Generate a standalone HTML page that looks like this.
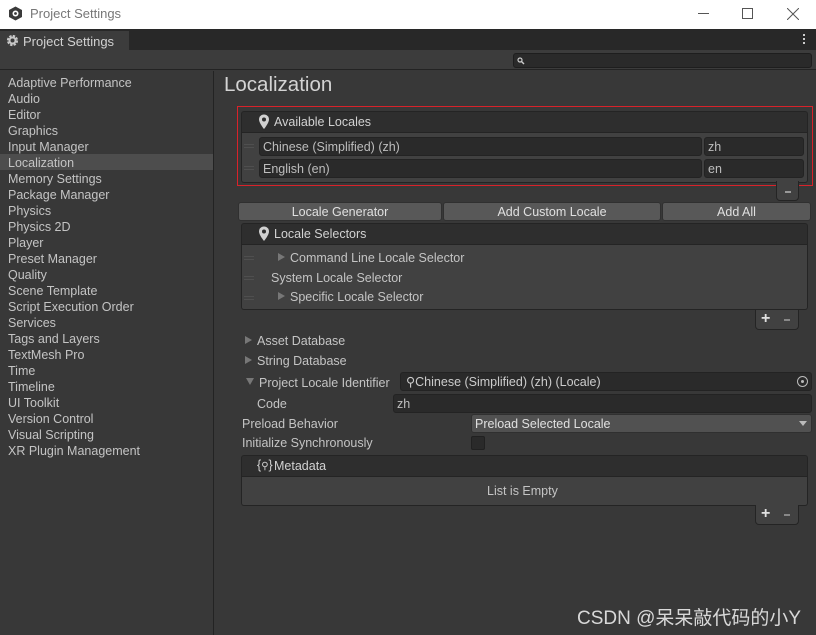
<!DOCTYPE html>
<html><head><meta charset="utf-8"><style>
*{box-sizing:border-box;margin:0;padding:0}
body{width:816px;height:635px;overflow:hidden;background:#383838;font-family:"Liberation Sans","Noto Sans CJK SC",sans-serif;font-size:12.5px;color:#c4c4c4;position:relative}
.a{position:absolute;white-space:nowrap}
.side div{height:16px;line-height:18px;padding-left:8px}
.fld{position:absolute;background:#2a2a2a;border:1px solid #232323;border-radius:3px;height:19px;line-height:19px;padding-left:3px;color:#bdbdbd}
.btn{position:absolute;background:#585858;border:1px solid #303030;border-radius:3px;height:19px;line-height:19px;text-align:center;color:#e0e0e0}
.hdr{position:absolute;background:#2e2e2e;border:1px solid #242424;border-radius:3px 3px 0 0}
.body{position:absolute;background:#414141;border:1px solid #242424;border-top:none;border-radius:0 0 3px 3px}
.grip{position:absolute;width:10px;height:4px;border-top:1px solid #4f4f4f;border-bottom:1px solid #4f4f4f}
.pm{position:absolute;background:#414141;border:1px solid #242424;border-top:none;border-radius:0 0 4px 4px;height:20px;color:#e0e0e0}
.tri{position:absolute;width:0;height:0;border-left:7px solid #8a8a8a;border-top:4.5px solid transparent;border-bottom:4.5px solid transparent}
.t{margin-top:1px}
</style></head><body>
<div class="a" style="left:0;top:0;width:816px;height:29px;background:#fff"></div>
<svg class="a" style="left:8px;top:6px" width="15" height="15" viewBox="0 0 15 15"><path d="M7.5 0.5 L14 4 L14 11 L7.5 14.5 L1 11 L1 4Z" fill="#3a3a3a"/><circle cx="7.5" cy="7.5" r="3" fill="#fff"/><circle cx="7.5" cy="7.5" r="1.4" fill="#3a3a3a"/></svg>
<div class="a" style="left:30px;top:6px;color:#777;font-size:13px">Project Settings</div>
<div class="a" style="left:698px;top:13px;width:11px;height:1px;background:#555"></div>
<div class="a" style="left:742px;top:8px;width:11px;height:11px;border:1px solid #555"></div>
<svg class="a" style="left:787px;top:8px" width="12" height="12"><path d="M0 0L12 12M12 0L0 12" stroke="#555" stroke-width="1"/></svg>
<div class="a" style="left:0;top:29px;width:816px;height:21px;background:#282828"></div>
<div class="a" style="left:0;top:31px;width:129px;height:19px;background:#3c3c3c"></div>
<svg class="a" style="left:6px;top:34px" width="13" height="13" viewBox="0 0 13 13"><circle cx="6.5" cy="6.5" r="4.3" fill="none" stroke="#c8c8c8" stroke-width="2.6" stroke-dasharray="2.2 1.2"/><circle cx="6.5" cy="6.5" r="3" fill="none" stroke="#c8c8c8" stroke-width="2"/></svg>
<div class="a" style="left:23px;top:34px;color:#d2d2d2;font-size:13px">Project Settings</div>
<div class="a" style="left:803px;top:34px;width:2px;height:2px;background:#ccc;box-shadow:0 4px #ccc,0 8px #ccc"></div>
<div class="a" style="left:0;top:50px;width:816px;height:20px;background:#3c3c3c;border-bottom:1px solid #232323"></div>
<div class="a" style="left:513px;top:53px;width:299px;height:15px;background:#2a2a2a;border:1px solid #1e1e1e;border-radius:3px"></div>
<svg class="a" style="left:517px;top:57px" width="8" height="8"><circle cx="3" cy="3" r="2" fill="none" stroke="#ccc" stroke-width="1.2"/><path d="M4.5 4.5L7 7" stroke="#ccc" stroke-width="1.4"/></svg>
<div class="a" style="left:213px;top:71px;width:1px;height:564px;background:#232323"></div>
<div class="a" style="left:0;top:154px;width:213px;height:16px;background:#4d4d4d"></div>
<div class="a side" style="left:0;top:74px;width:213px">
<div>Adaptive Performance</div><div>Audio</div><div>Editor</div><div>Graphics</div><div>Input Manager</div><div>Localization</div><div>Memory Settings</div><div>Package Manager</div><div>Physics</div><div>Physics 2D</div><div>Player</div><div>Preset Manager</div><div>Quality</div><div>Scene Template</div><div>Script Execution Order</div><div>Services</div><div>Tags and Layers</div><div>TextMesh Pro</div><div>Time</div><div>Timeline</div><div>UI Toolkit</div><div>Version Control</div><div>Visual Scripting</div><div>XR Plugin Management</div>
</div>
<div class="a" style="left:224px;top:73px;font-size:20.5px;color:#d4d4d4">Localization</div>

<div class="a" style="left:237px;top:106px;width:576px;height:80px;border:1px solid #d8222a"></div>
<div class="hdr" style="left:241px;top:111px;width:567px;height:22px"></div>
<svg class="a" style="left:258px;top:114px" width="12" height="16" viewBox="0 0 12 16"><path d="M6 0.5C3 0.5 1 2.7 1 5.5C1 9 6 15 6 15C6 15 11 9 11 5.5C11 2.7 9 0.5 6 0.5Z" fill="#d0d0d0"/><circle cx="6" cy="5.5" r="2" fill="#2e2e2e"/></svg>
<div class="a t" style="left:274px;top:114px;color:#d2d2d2">Available Locales</div>
<div class="body" style="left:241px;top:133px;width:567px;height:50px"></div>
<div class="grip" style="left:244px;top:144px"></div><div class="grip" style="left:244px;top:166px"></div>
<div class="fld" style="left:259px;top:137px;width:443px">Chinese (Simplified) (zh)</div>
<div class="fld" style="left:704px;top:137px;width:100px">zh</div>
<div class="fld" style="left:259px;top:159px;width:443px">English (en)</div>
<div class="fld" style="left:704px;top:159px;width:100px">en</div>
<div class="pm" style="left:776px;top:181px;width:23px"><div class="a" style="left:8px;top:10px;width:6px;height:2px;background:#999"></div></div>

<div class="btn" style="left:238px;top:202px;width:204px">Locale Generator</div>
<div class="btn" style="left:443px;top:202px;width:218px">Add Custom Locale</div>
<div class="btn" style="left:662px;top:202px;width:149px">Add All</div>

<div class="hdr" style="left:241px;top:223px;width:567px;height:22px"></div>
<svg class="a" style="left:258px;top:226px" width="12" height="16" viewBox="0 0 12 16"><path d="M6 0.5C3 0.5 1 2.7 1 5.5C1 9 6 15 6 15C6 15 11 9 11 5.5C11 2.7 9 0.5 6 0.5Z" fill="#d0d0d0"/><circle cx="6" cy="5.5" r="2" fill="#2e2e2e"/></svg>
<div class="a t" style="left:274px;top:226px;color:#d2d2d2">Locale Selectors</div>
<div class="body" style="left:241px;top:245px;width:567px;height:65px"></div>
<div class="grip" style="left:244px;top:256px"></div><div class="grip" style="left:244px;top:276px"></div><div class="grip" style="left:244px;top:296px"></div>
<div class="tri" style="left:278px;top:253px;border-left-color:#777"></div>
<div class="a t" style="left:290px;top:250px">Command Line Locale Selector</div>
<div class="a t" style="left:271px;top:270px">System Locale Selector</div>
<div class="tri" style="left:278px;top:292px;border-left-color:#777"></div>
<div class="a t" style="left:290px;top:289px">Specific Locale Selector</div>
<div class="pm" style="left:755px;top:310px;width:44px"><span class="a" style="left:5px;top:0;font-size:16px;font-weight:bold">+</span><div class="a" style="left:28px;top:9px;width:6px;height:2px;background:#888"></div></div>

<div class="tri" style="left:245px;top:336px;border-left-color:#777"></div>
<div class="a t" style="left:257px;top:333px">Asset Database</div>
<div class="tri" style="left:245px;top:356px;border-left-color:#777"></div>
<div class="a t" style="left:257px;top:353px">String Database</div>
<div class="a" style="left:246px;top:378px;width:0;height:0;border-top:7px solid #777;border-left:4.5px solid transparent;border-right:4.5px solid transparent"></div>
<div class="a t" style="left:259px;top:375px">Project Locale Identifier</div>
<div class="fld" style="left:400px;top:372px;width:412px;padding-left:5px;color:#ccc">⚲Chinese (Simplified) (zh) (Locale)</div>
<div class="a" style="left:797px;top:376px;width:11px;height:11px;border:1px solid #bbb;border-radius:50%"><div class="a" style="left:3px;top:3px;width:3px;height:3px;background:#bbb;border-radius:50%"></div></div>
<div class="a t" style="left:257px;top:396px">Code</div>
<div class="fld" style="left:393px;top:394px;width:419px">zh</div>
<div class="a t" style="left:242px;top:416px">Preload Behavior</div>
<div class="btn" style="left:471px;top:414px;width:341px;background:#515151;text-align:left;padding-left:3px">Preload Selected Locale</div>
<div class="a" style="left:799px;top:421px;width:0;height:0;border-top:5px solid #bbb;border-left:4px solid transparent;border-right:4px solid transparent"></div>
<div class="a t" style="left:242px;top:435px">Initialize Synchronously</div>
<div class="a" style="left:471px;top:436px;width:14px;height:14px;background:#2a2a2a;border:1px solid #212121;border-radius:2px"></div>

<div class="hdr" style="left:241px;top:455px;width:567px;height:22px"></div>
<div class="a t" style="left:257px;top:457px;color:#d2d2d2">{<span style="font-size:10px">⚲</span>}</div>
<div class="a t" style="left:274px;top:458px;color:#d2d2d2">Metadata</div>
<div class="body" style="left:241px;top:477px;width:567px;height:29px"></div>
<div class="a t" style="left:487px;top:483px">List is Empty</div>
<div class="pm" style="left:755px;top:505px;width:44px"><span class="a" style="left:5px;top:0;font-size:16px;font-weight:bold">+</span><div class="a" style="left:28px;top:9px;width:6px;height:2px;background:#888"></div></div>

<div class="a" style="left:577px;top:603px;font-size:19px;color:#d8d8d8">CSDN @呆呆敲代码的小Y</div>
</body></html>
